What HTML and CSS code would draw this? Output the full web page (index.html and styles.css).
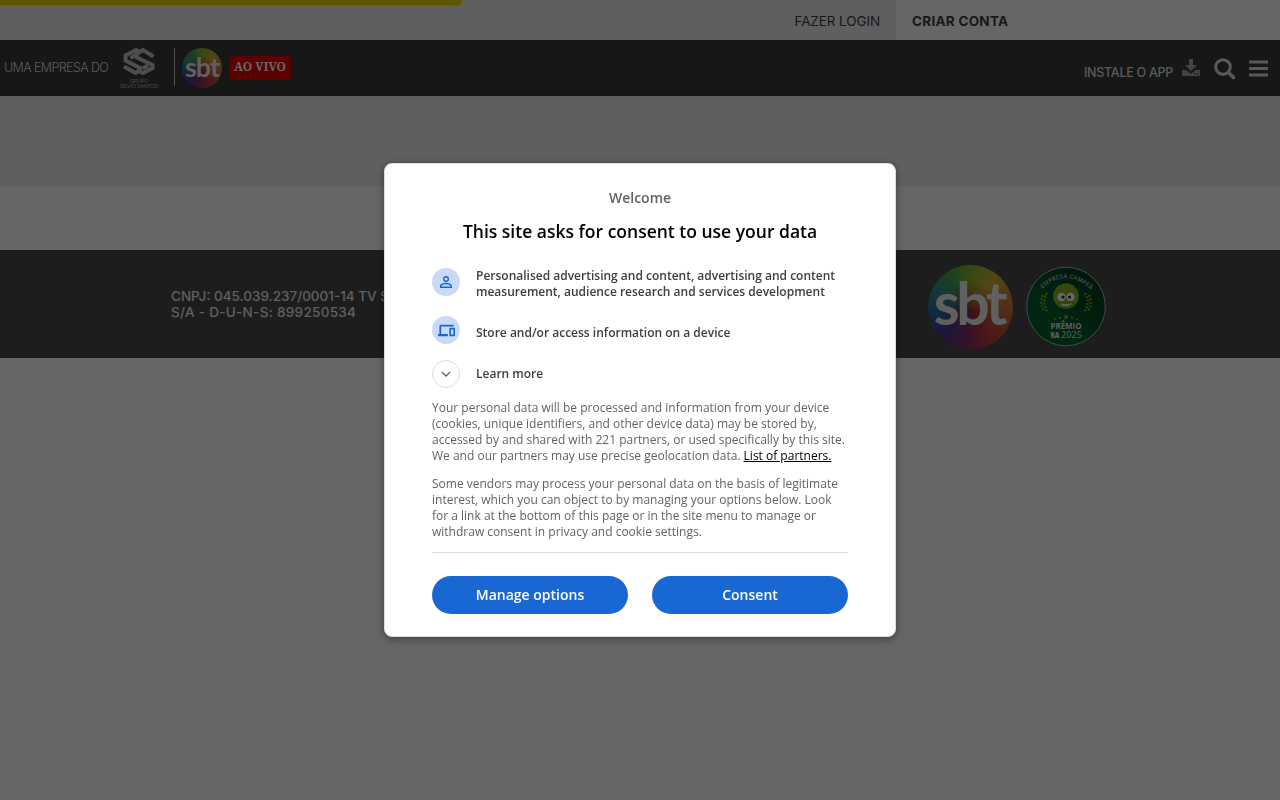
FILE: index.html
```html
<!DOCTYPE html>
<html lang="pt-br">
<head>
    <meta charset="UTF-8">
    <meta name="viewport" content="width=device-width, initial-scale=1.0">
    <title>SBT</title>
    <link rel="stylesheet" href="styles.css">
</head>
<body>
    <div class="loading-bar"></div>
    <div class="login-bar">
        <div class="login-left"><a href="#" class="login-link">FAZER LOGIN</a></div>
        <a href="#" class="signup-link">CRIAR CONTA</a>
    </div>

    <header class="header">
        <span class="company">UMA EMPRESA DO</span>
        <svg class="group-logo" viewBox="0 0 40 42" width="40" height="42">
            <g fill="none" stroke="#c4c4c4" stroke-width="4">
                <path d="M22 5.500L17 3L6.500 8.500V13.500L21 21V23L16.500 26L5 19.500"/>
                <path d="M34.500 9.500L24 3L18 6.500V10.500L33.500 18V21L24 26L18.500 23.500"/>
                <path d="M11.500 11L17 8M23.500 21.500L29 18.500"/>
            </g>
            <text x="20" y="35.500" class="group-name" textLength="18">GRUPO</text>
            <text x="20" y="41" class="group-name" textLength="38">SILVIO SANTOS</text>
        </svg>
        <span class="separator"></span>
        <div class="sbt-logo sbt-small"><span>sbt</span></div>
        <a href="#" class="live">AO VIVO</a>
        <nav class="menu">
            <a href="#" class="install">INSTALE O APP</a>
            <svg class="download" viewBox="0 0 20 18" width="20" height="18">
                <path fill="#a8a8a8" d="M8 0h4v6h4l-6 6-6-6h4zM1 11h4l5 4 5-4h4v6H1z"/>
                <path fill="#3a3a3a" d="M13 14h1.500v1.500H13zM16 14h1.500v1.500H16z"/>
            </svg>
            <svg class="search" viewBox="0 0 22 22" width="22" height="22" fill="none" stroke="#dfdfdf">
                <circle cx="9" cy="9" r="7.300" stroke-width="3"/>
                <path d="M14.500 14.500l5 5" stroke-width="3.500" stroke-linecap="round"/>
            </svg>
            <svg class="burger" viewBox="0 0 19 17" width="19" height="17">
                <path fill="#dfdfdf" d="M0 .5h19v3H0zM0 7h19v3H0zM0 13.500h19v3H0z"/>
            </svg>
        </nav>
    </header>

    <div class="ad-area"></div>
    <main class="content"></main>

    <footer class="footer">
        <p class="cnpj"><span class="cnpj-first">CNPJ: 045.039.237/0001-14 TV SBT</span><br><span class="cnpj-second">S/A - D-U-N-S: 899250534</span></p>
        <div class="sbt-logo sbt-big"><span>sbt</span></div>
        <svg class="award" viewBox="0 0 80 82" width="80" height="82">
            <defs>
                <linearGradient id="green" x1="0" y1="1" x2="1" y2="0">
                    <stop offset="0" stop-color="#005c2c"/>
                    <stop offset=".35" stop-color="#00602c"/>
                    <stop offset="1" stop-color="#003019"/>
                </linearGradient>
                <path id="arc" d="M15 24Q40 0 66 25"/>
            </defs>
            <circle cx="40" cy="40.500" r="39.300" fill="url(#green)" stroke="#c5d5c8" stroke-width=".8"/>
            <text class="award-top"><textPath href="#arc" startOffset="2">EMPRESA CAMPEÃ</textPath></text>
            <circle cx="40" cy="30" r="12.800" fill="#84b51d"/>
            <circle cx="35.500" cy="31" r="4.200" fill="#fff"/>
            <circle cx="44.500" cy="31" r="4.200" fill="#fff"/>
            <circle cx="37" cy="31" r="1.600" fill="#222"/>
            <circle cx="43.500" cy="31" r="1.600" fill="#222"/>
            <path d="M33.500 36.500q6.500 2 13 0q-1 4.500-6.500 4.500t-6.500-4.500" fill="#e5efcf" stroke="#456317" stroke-width=".7"/>
            <g fill="none" stroke="#849e26" stroke-width="2" stroke-dasharray="2 1.500">
                <path d="M21 27q-6 10 1 19M17 29q-4 9 1 16"/>
                <path d="M59 27q6 10-1 19M63 29q4 9-1 16"/>
            </g>
            <g fill="#8aa824">
                <path d="M40 48l.9 1.800 2 .3-1.500 1.400.4 2-1.800-1-1.800 1 .4-2-1.500-1.400 2-.3z"/>
                <circle cx="29" cy="53" r=".9"/>
                <circle cx="34" cy="52" r="1.100"/>
                <circle cx="46" cy="52" r="1.100"/>
                <circle cx="51" cy="53" r=".9"/>
            </g>
            <text x="40" y="62.500" class="award-title" textLength="31" lengthAdjust="spacingAndGlyphs">PRÊMIO</text>
            <text x="24.500" y="71.500" class="award-ra" textLength="9" lengthAdjust="spacingAndGlyphs">RA</text>
            <text x="35" y="71.500" class="award-year" textLength="21" lengthAdjust="spacingAndGlyphs">2025</text>
        </svg>
    </footer>

    <div class="overlay">
        <div class="consent">
            <p class="welcome">Welcome</p>
            <h1>This site asks for consent to use your data</h1>
            <div class="purpose first">
                <span class="purpose-icon">
                    <svg viewBox="0 0 24 24" width="18" height="18" fill="#1967d2"><path d="M12 5.900a2.100 2.100 0 1 1 0 4.200 2.100 2.100 0 0 1 0-4.200m0 9c2.970 0 6.100 1.460 6.100 2.100v1.100H5.900V17c0-.64 3.130-2.100 6.100-2.100M12 4a4 4 0 1 0 0 8 4 4 0 0 0 0-8m0 9c-2.670 0-8 1.340-8 4v3h16v-3c0-2.660-5.330-4-8-4"/></svg>
                </span>
                <span>Personalised advertising and content, advertising and content measurement, audience research and services development</span>
            </div>
            <div class="purpose second">
                <span class="purpose-icon">
                    <svg viewBox="0 0 24 24" width="17" height="17" fill="#1967d2"><path d="M4.500 6.500H22V4H4c-1.100 0-2 .9-2 2v11H0v3h14v-3H4.500zM23 8h-6c-.55 0-1 .45-1 1v10c0 .55.45 1 1 1h6c.55 0 1-.45 1-1V9c0-.55-.45-1-1-1m-1.300 9.500h-3.400v-7h3.400z"/></svg>
                </span>
                <span class="second-text">Store and/or access information on a device</span>
            </div>
            <div class="purpose third">
                <span class="purpose-icon expand">
                    <svg viewBox="0 0 16 16" width="16" height="16" fill="none" stroke="#5f6368" stroke-width="1.300"><path d="M4 6l4 4L12 6"/></svg>
                </span>
                <span>Learn more</span>
            </div>
            <p class="info">Your personal data will be processed and information from your device (cookies, unique identifiers, and other device data) may be stored by, accessed by and shared with 221 partners, or used specifically by this site. We and our partners may use precise geolocation data. <a href="#">List of partners.</a></p>
            <p class="info">Some vendors may process your personal data on the basis of legitimate interest, which you can object to by managing your options below. Look for a link at the bottom of this page or in the site menu to manage or withdraw consent in privacy and cookie settings.</p>
            <div class="buttons">
                <button type="button">Manage options</button>
                <button type="button">Consent</button>
            </div>
        </div>
    </div>
</body>
</html>
```
FILE: styles.css
```css
* { box-sizing: border-box; }
body {
    margin: 0;
    height: 100vh;
    overflow: hidden;
    background-color: #fff;
    font-family: Inter, "Open Sans", sans-serif;
}
a { color: inherit; text-decoration: none; }
p, h1 { margin: 0; }

.loading-bar {
    position: absolute;
    top: 0;
    left: 0;
    width: 461px;
    height: 5px;
    background-color: #e5dc00;
    box-shadow: 0 0 3px #e5dc00;
}
.login-bar {
    display: flex;
    height: 40px;
    font-size: 13.5px;
    line-height: 42px;
    color: #404040;
}
.login-left {
    width: 896px;
    padding-right: 16px;
    text-align: right;
    background-color: #ededed;
}
.login-link { letter-spacing: -0.1px; }
.signup-link { padding-left: 16px; font-weight: 700; letter-spacing: 0.27px; }

.header {
    display: flex;
    align-items: center;
    height: 56px;
    padding: 0 12px 0 4px;
    background-color: #3a3a3a;
    color: #dfdfdf;
}
.company {
    width: 115px;
    margin-top: -1px;
    font-size: 12.5px;
    font-weight: 300;
    letter-spacing: -0.6px;
    white-space: nowrap;
}
.group-logo { flex: none; }
.group-name {
    font: 5.4px Inter, sans-serif;
    fill: #b0b0b0;
    text-anchor: middle;
}
.separator { width: 1px; height: 38px; margin: 0 7px 2px 15px; background-color: #c8c8c8; }
.sbt-logo {
    display: flex;
    justify-content: center;
    flex: none;
    border-radius: 50%;
    background: radial-gradient(circle, rgba(150, 30, 40, .65), rgba(150, 60, 50, 0) 45%),
        conic-gradient(#8fb52a, #c9b03c 40deg, #cf8038 80deg, #c04a3b 130deg, #a83050 165deg, #742f78 195deg, #463a8c 230deg, #2a6da0 265deg, #2f8d8b 292deg, #459f55 325deg, #8fb52a);
    color: #f0f0f0;
    font-family: Lato, sans-serif;
    font-weight: 700;
}
.sbt-small { width: 40px; height: 40px; font-size: 27px; line-height: 37px; letter-spacing: -1px; }
.sbt-big { width: 85px; height: 85px; font-size: 59px; line-height: 76px; letter-spacing: -3.5px; }
.sbt-big span { margin-left: -3px; }
.live {
    width: 62px;
    height: 24px;
    margin-left: 7px;
    border-radius: 4px;
    background-color: #e60000;
    color: #fff;
    font: bold 12px/22px "Noto Serif", "Liberation Serif", serif;
    text-align: center;
}
.menu { display: flex; align-items: center; margin-left: auto; }
.install {
    padding-top: 9px;
    font-size: 12.5px;
    font-weight: 500;
    letter-spacing: -0.27px;
    white-space: nowrap;
}
.download { margin-left: 8px; }
.search { margin: 2px 13px 0 13px; }

.ad-area { height: 90px; background-color: #ededed; }
.content { height: 64px; }
.footer {
    display: flex;
    align-items: center;
    height: 108px;
    padding: 0 0 0 171px;
    background-color: #4a4a4a;
    color: #ececec;
}
.cnpj { width: 757px; font-size: 13.5px; line-height: 16px; font-weight: 500; }
.cnpj-second { letter-spacing: 0.3px; }
.sbt-big { margin-top: 6px; }
.award { margin: 5px 0 0 13px; }
.award text { font-family: "Open Sans", sans-serif; fill: #e5e5e5; }
.award .award-top { font-size: 5.8px; letter-spacing: 0.3px; }
.award .award-title { font-size: 8.5px; font-weight: 700; text-anchor: middle; }
.award .award-ra { font-size: 8.5px; font-weight: 800; }
.award .award-year { font-size: 9.5px; }

.overlay {
    position: fixed;
    inset: 0;
    display: flex;
    align-items: center;
    justify-content: center;
    background-color: rgba(0, 0, 0, .6);
}
.consent {
    width: 512px;
    height: 474px;
    padding: 24px 47px;
    border: 1px solid #dadce0;
    border-radius: 8px;
    background-color: #fff;
    box-shadow: 0 2px 8px rgba(0, 0, 0, .4);
    color: #3c4043;
    font-family: "Open Sans", sans-serif;
}
.welcome { font-size: 14px; font-weight: 600; line-height: 20px; text-align: center; color: #5f6368; }
.consent h1 {
    margin-top: 11px;
    font-size: 17.5px;
    font-weight: 600;
    line-height: 24px;
    text-align: center;
    color: #000;
}
.purpose { display: flex; gap: 16px; font-size: 12px; font-weight: 600; line-height: 16px; }
.first { margin-top: 25px; }
.second { margin-top: 16px; }
.second-text { padding-top: 9px; }
.third { margin-top: 16px; margin-bottom: 12px; align-items: center; }
.purpose-icon {
    display: flex;
    align-items: center;
    justify-content: center;
    flex: none;
    width: 28px;
    height: 28px;
    border-radius: 50%;
    background-color: #c8daf5;
}
.expand { border: 1px solid #dadce0; background-color: #fff; }
.info { margin-bottom: 12px; font-size: 12px; line-height: 16px; color: #5f6368; }
.info a { color: #000; text-decoration: underline; }
.buttons { display: flex; gap: 24px; padding-top: 23px; border-top: 1px solid #dadce0; }
.buttons button {
    flex: 1;
    height: 38px;
    padding: 0 6px 2px;
    border: none;
    border-radius: 19px;
    background-color: #1967d2;
    color: #fff;
    font: 600 14px "Open Sans", sans-serif;
    cursor: pointer;
}
```
